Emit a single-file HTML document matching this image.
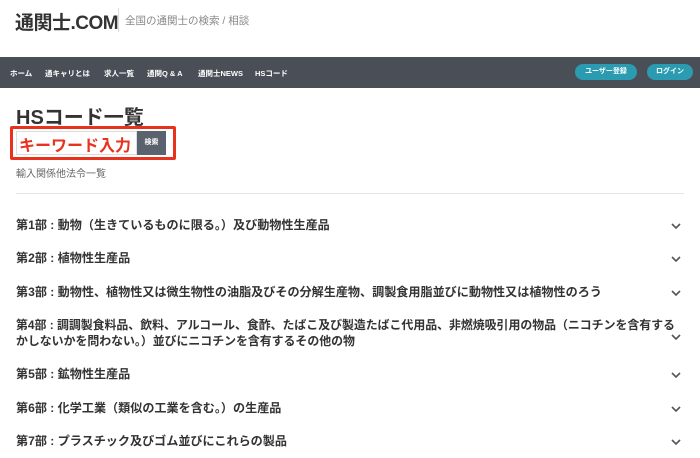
<!DOCTYPE html>
<html><head><meta charset="utf-8"><style>
*{margin:0;padding:0;box-sizing:border-box}
body{width:700px;height:458px;overflow:hidden;background:#fff;font-family:"Liberation Sans","Noto Sans CJK JP",sans-serif;color:#333;position:relative}
.a{position:absolute;white-space:nowrap}
.logo{left:15px;top:8px;font-size:19px;font-weight:bold;color:#333;letter-spacing:-0.5px}
.sep{left:118px;top:8px;width:1px;height:24px;background:#ddd}
.tag{left:125px;top:13px;font-size:10.5px;color:#888}
.nav{left:0;top:57px;width:700px;height:31px;background:#4a4f57}
.nav span{position:absolute;top:11px;font-size:7.5px;color:#fff;font-weight:bold}
.btn{position:absolute;top:7px;height:16px;border-radius:8px;background:#2a9bb0;color:#fff;font-size:7px;font-weight:bold;text-align:center;line-height:16px}
h1{position:absolute;left:16px;top:101px;font-size:20px;font-weight:bold;color:#333}
.box{left:10px;top:126px;width:166px;height:34px;border:3px solid #e8321e;border-radius:2px}
.inp{left:16px;top:131px;width:121px;height:24px;border:1px solid #ddd;background:#fff}
.kw{left:19px;top:132px;font-size:16px;font-weight:bold;color:#e8321e;text-shadow:-1px -1px 0 #fff,1px -1px 0 #fff,-1px 1px 0 #fff,1px 1px 0 #fff}
.sb{left:137px;top:131px;width:29px;height:24px;background:#5a626d;color:#fff;font-size:7px;font-weight:bold;text-align:center;line-height:24px}
.law{left:16px;top:165px;font-size:10px;color:#666}
.hr{left:16px;top:193px;width:668px;height:1px;background:#e6e6e6}
.r{left:16px;font-size:12.1px;font-weight:bold;color:#333}
.c{left:671px;width:10px;height:10px}
</style></head><body>
<div class="a logo">通関士.COM</div>
<div class="a sep"></div>
<div class="a tag">全国の通関士の検索 / 相談</div>
<div class="a nav">
<span style="left:10px">ホーム</span>
<span style="left:45px">通キャリとは</span>
<span style="left:104px">求人一覧</span>
<span style="left:147px">通関Q &amp; A</span>
<span style="left:198px">通関士NEWS</span>
<span style="left:255px">HSコード</span>
<div class="btn" style="left:575px;width:62px">ユーザー登録</div>
<div class="btn" style="left:647px;width:46px">ログイン</div>
</div>
<h1>HSコード一覧</h1>
<div class="a box"></div>
<div class="a inp"></div>
<div class="a kw">キーワード入力</div>
<div class="a sb">検索</div>
<div class="a law">輸入関係他法令一覧</div>
<div class="a hr"></div>
<div class="a r" style="top:216px">第1部 : 動物（生きているものに限る。）及び動物性生産品</div>
<div class="a r" style="top:249px">第2部 : 植物性生産品</div>
<div class="a r" style="top:283px">第3部 : 動物性、植物性又は微生物性の油脂及びその分解生産物、調製食用脂並びに動物性又は植物性のろう</div>
<div class="a r" style="top:317px;line-height:16px;font-size:11.9px">第4部 : 調調製食料品、飲料、アルコール、食酢、たばこ及び製造たばこ代用品、非燃焼吸引用の物品（ニコチンを含有する<br>かしないかを問わない。）並びにニコチンを含有するその他の物</div>
<div class="a r" style="top:365px">第5部 : 鉱物性生産品</div>
<div class="a r" style="top:399px">第6部 : 化学工業（類似の工業を含む。）の生産品</div>
<div class="a r" style="top:432px">第7部 : プラスチック及びゴム並びにこれらの製品</div>
<svg class="a c" style="top:221px" viewBox="0 0 10 10"><path d="M1 3l4 4 4-4" fill="none" stroke="#555" stroke-width="1.6"/></svg>
<svg class="a c" style="top:254px" viewBox="0 0 10 10"><path d="M1 3l4 4 4-4" fill="none" stroke="#555" stroke-width="1.6"/></svg>
<svg class="a c" style="top:288px" viewBox="0 0 10 10"><path d="M1 3l4 4 4-4" fill="none" stroke="#555" stroke-width="1.6"/></svg>
<svg class="a c" style="top:332px" viewBox="0 0 10 10"><path d="M1 3l4 4 4-4" fill="none" stroke="#555" stroke-width="1.6"/></svg>
<svg class="a c" style="top:370px" viewBox="0 0 10 10"><path d="M1 3l4 4 4-4" fill="none" stroke="#555" stroke-width="1.6"/></svg>
<svg class="a c" style="top:404px" viewBox="0 0 10 10"><path d="M1 3l4 4 4-4" fill="none" stroke="#555" stroke-width="1.6"/></svg>
<svg class="a c" style="top:437px" viewBox="0 0 10 10"><path d="M1 3l4 4 4-4" fill="none" stroke="#555" stroke-width="1.6"/></svg>
</body></html>
